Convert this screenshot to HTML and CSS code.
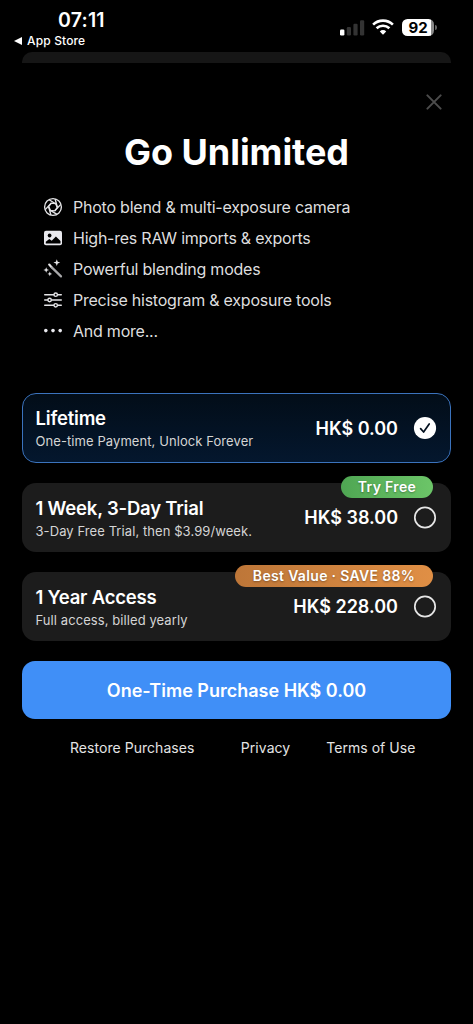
FILE: index.html
```html
<!DOCTYPE html>
<html lang="en">
<head>
<meta charset="utf-8">
<title>Go Unlimited</title>
<link rel="stylesheet" href="styles.css">
</head>
<body>
<header class="status">
  <div class="status-left">
    <div class="clock"><span>07:11</span></div>
    <div class="back">
      <svg width="8" height="8" viewBox="0 0 8 8"><path d="M0 4 8 0v8z" fill="#fff"/></svg>
      <span>App Store</span>
    </div>
  </div>
  <div class="status-right">
    <svg class="signal" width="25" height="16" viewBox="0 0 25 16">
      <rect x="0" y="9.5" width="4.4" height="6" rx="1.2" fill="#fff"/>
      <rect x="6.8" y="7" width="4.2" height="8.5" rx="1.2" fill="#333"/>
      <rect x="13.4" y="3.8" width="4.2" height="11.7" rx="1.2" fill="#333"/>
      <rect x="20" y="0.3" width="4.2" height="15.2" rx="1.2" fill="#333"/>
    </svg>
    <svg class="wifi" width="22" height="16" viewBox="0 0 22 16" fill="none" stroke="#fff" stroke-width="2.6">
      <path d="M1.1 5.6a14.2 14.2 0 0 1 19.8 0"/>
      <path d="M4.6 9.3a9.2 9.2 0 0 1 12.8 0"/>
      <path d="M11 15.8 7.8 12.4a4.6 4.6 0 0 1 6.4 0z" fill="#fff" stroke="none"/>
    </svg>
    <div class="battery"><span class="battery-body">92</span><span class="battery-cap"></span></div>
  </div>
</header>
<div class="sheet-behind"></div>
<main class="sheet">
  <div class="close-row">
    <svg width="16" height="16" viewBox="0 0 16 16"><path d="M1.4 1.4 14.6 14.6M14.6 1.4 1.4 14.6" stroke="#4c4c4c" stroke-width="2" stroke-linecap="round"/></svg>
  </div>
  <h1 class="title"><span>Go Unlimited</span></h1>
  <ul class="features">
    <li>
      <svg width="20" height="20" viewBox="0 0 20 20" fill="none" stroke="#e4e4e6" stroke-width="1.35">
        <circle cx="10" cy="10" r="8.4"/>
        <path d="M8.2 6.2 12.6 6.7 14.4 10.5 11.8 13.8 7.4 13.3 5.6 9.5z"/>
        <path d="M12.6 6.7 6.1 2.7M14.4 10.5 12.1 2M11.8 13.8 17.8 7.4M7.4 13.3 14 17.3M5.6 9.5 7.9 18M8.2 6.2 2.2 12.6"/>
      </svg><span>Photo blend &amp; multi-exposure camera</span></li>
    <li>
      <svg width="20" height="20" viewBox="0 0 20 20">
        <rect x="1" y="2.8" width="18" height="14.4" rx="2" fill="#e9e9ee"/>
        <circle cx="6.6" cy="7.5" r="1.9" fill="#000"/>
        <path d="M2.8 15.5v-1.8l3.5-2.8 2.4 1.8 4.2-4.1 4.6 4.4v2.5z" fill="#000"/>
      </svg><span>High-res RAW imports &amp; exports</span></li>
    <li>
      <svg width="20" height="20" viewBox="0 0 20 20" fill="#e4e4e6">
        <path d="M6.2 5.6 8.8 8.4" stroke="#e4e4e6" stroke-width="2.2" stroke-linecap="round"/>
        <path d="M9 8.6 18 17.4" stroke="#a8a8aa" stroke-width="2.2" stroke-linecap="round"/>
        <path d="M13.8.3l.9 2.4 2.5.9-2.5.9-.9 2.5-.9-2.5-2.5-.9 2.5-.9zM3.2 8.2l.8 2 2 .8-2 .8-.8 2-.8-2-2-.8 2-.8zM6.8 12.5l.7 1.7 1.7.7-1.7.7-.7 1.7-.7-1.7-1.7-.7 1.7-.7z"/>
      </svg><span>Powerful blending modes</span></li>
    <li>
      <svg width="20" height="20" viewBox="0 0 20 20" fill="#000" stroke="#e4e4e6" stroke-width="1.4" stroke-linecap="round">
        <path d="M1.7 4.7h16.6M1.7 10h16.6M1.7 15.3h16.6"/>
        <circle cx="12.7" cy="4.7" r="1.7"/><circle cx="6.6" cy="10" r="1.7"/><circle cx="12.7" cy="15.3" r="1.7"/>
      </svg><span>Precise histogram &amp; exposure tools</span></li>
    <li>
      <svg width="20" height="20" viewBox="0 0 20 20" fill="#e9e9ee"><circle cx="2.8" cy="9.6" r="1.8"/><circle cx="10" cy="9.6" r="1.8"/><circle cx="17.2" cy="9.6" r="1.8"/></svg><span>And more...</span></li>
  </ul>
  <section class="plans">
    <article class="plan selected">
      <div class="plan-info"><h2>Lifetime</h2><p>One-time Payment, Unlock Forever</p></div>
      <div class="price">HK$ 0.00</div>
      <svg width="24" height="24" viewBox="0 0 24 24"><circle cx="12" cy="12" r="11.1" fill="#fff"/><path d="M7.6 12.6 10.6 16 16.2 7.9" fill="none" stroke="#03101f" stroke-width="1.7" stroke-linecap="round" stroke-linejoin="round"/></svg>
    </article>
    <article class="plan">
      <span class="badge green">Try Free</span>
      <div class="plan-info"><h2>1 Week, 3-Day Trial</h2><p>3-Day Free Trial, then $3.99/week.</p></div>
      <div class="price">HK$ 38.00</div>
      <svg width="24" height="24" viewBox="0 0 24 24"><circle cx="12" cy="11.5" r="10.2" fill="none" stroke="#e6e6e6" stroke-width="1.7"/></svg>
    </article>
    <article class="plan">
      <span class="badge orange">Best Value · SAVE 88%</span>
      <div class="plan-info"><h2>1 Year Access</h2><p>Full access, billed yearly</p></div>
      <div class="price">HK$ 228.00</div>
      <svg width="24" height="24" viewBox="0 0 24 24"><circle cx="12" cy="11.5" r="10.2" fill="none" stroke="#e6e6e6" stroke-width="1.7"/></svg>
    </article>
  </section>
  <button class="buy">One-Time Purchase HK$ 0.00</button>
  <nav class="links"><a>Restore Purchases</a><a class="privacy">Privacy</a><a class="terms">Terms of Use</a></nav>
</main>
</body>
</html>
```
FILE: styles.css
```css
* { box-sizing: border-box; }
body {
  margin: 0;
  height: 1024px;
  background: #000;
  color: #fff;
  font-family: Inter, "Liberation Sans", sans-serif;
  overflow: hidden;
}
h1, h2, p, ul { margin: 0; padding: 0; }
svg { display: block; flex: none; }

.status {
  display: flex;
  justify-content: space-between;
  height: 52px;
  padding: 0 36px 0 14px;
}
.clock {
  margin: 8px 0 0 44px;
  font-size: 19.5px;
  line-height: 24px;
  font-weight: 600;
  letter-spacing: .2px;
}
.back {
  display: flex;
  align-items: center;
  gap: 5px;
  margin-top: 1px;
  font-size: 12px;
  line-height: 16px;
  font-weight: 500;
  letter-spacing: .15px;
}
.status-right { display: flex; align-items: flex-start; padding-top: 19px; }
.signal { margin: 1px 7px 0 0; }
.wifi { margin-right: 8px; }
.battery { display: flex; align-items: center; gap: 1px; }
.battery-body {
  width: 32px;
  height: 17px;
  border-radius: 5.5px;
  background: linear-gradient(90deg, #fff 92%, #8a8a8a 92%);
  color: #000;
  font-size: 15px;
  line-height: 17px;
  font-weight: 700;
  text-align: center;
}
.battery-cap { width: 2px; height: 5px; border-radius: 0 2px 2px 0; background: #666; }

.sheet-behind {
  height: 11px;
  margin: 0 22px;
  border-radius: 10px 10px 0 0;
  background: #161616;
}
.sheet { padding: 31px 22px 0; }
.close-row { display: flex; justify-content: flex-end; padding-right: 9px; }
.title {
  margin-top: 20px;
  font-size: 36px;
  line-height: 44px;
  font-weight: 700;
  letter-spacing: -.05px;
  text-align: center;
}
.features {
  margin: 17px 0 0 21px;
  list-style: none;
  font-size: 16px;
  line-height: 31px;
  letter-spacing: -.23px;
  color: #dededf;
}
.features li { display: flex; align-items: center; gap: 10px; height: 31px; }
.features span { padding-top: 1px; }

.plans { display: grid; gap: 20px; margin-top: 47px; }
.plan {
  position: relative;
  display: flex;
  align-items: center;
  height: 69px;
  padding: 0 14px 0 13.5px;
  border-radius: 14px;
  background: #1c1c1c;
}
.plan.selected {
  height: 70px;
  padding: 0 13px 0 12.5px;
  border: 1.3px solid #3b73bd;
  background: linear-gradient(#020d18, #04172e);
}
.plan-info { flex: 1; padding-top: 2px; }
.plan h2 { font-size: 18.5px; line-height: 24px; font-weight: 600; letter-spacing: -.2px; }
.plan p { font-size: 13px; line-height: 22px; letter-spacing: .08px; color: #d5d5d5; }
.price { margin-right: 15px; font-size: 18px; font-weight: 600; }
.badge {
  position: absolute;
  top: -7px;
  right: 18px;
  height: 22px;
  border-radius: 11px;
  font-size: 14px;
  line-height: 22px;
  font-weight: 600;
  letter-spacing: .33px;
  text-align: center;
  text-shadow: 0 1px 2px rgba(0, 0, 0, .35);
}
.green { width: 92px; background: linear-gradient(90deg, #4fa653, #6cc568); }
.orange { width: 198px; background: linear-gradient(90deg, #bd7638, #e08f45); }

.buy {
  display: block;
  width: 100%;
  height: 58px;
  margin-top: 20px;
  border: 0;
  border-radius: 13px;
  background: #408ff7;
  color: #fff;
  font: 600 18px Inter, "Liberation Sans", sans-serif;
}
.links {
  display: flex;
  margin-top: 19px;
  padding-left: 48px;
  font-size: 14px;
  line-height: 20px;
  letter-spacing: .04px;
  color: #e4e4e4;
}
.privacy { margin-left: 46.5px; }
.terms { margin-left: 36px; }
```
